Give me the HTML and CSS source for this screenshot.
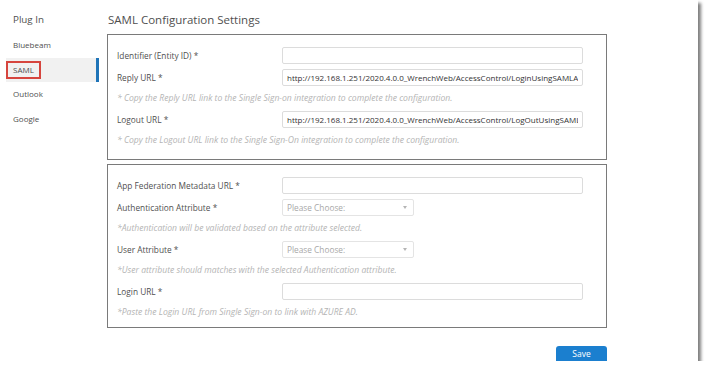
FILE: index.html
```html
<!DOCTYPE html>
<html lang="en">
<head>
    <meta charset="UTF-8">
    <title>SAML Configuration Settings</title>
    <link rel="stylesheet" href="styles.css">
</head>
<body>
    <div class="frame">
        <div class="sidebar">
            <div class="side-title">Plug In</div>
            <div class="side-item">Bluebeam</div>
            <div class="side-item active"><span class="mark">SAML</span></div>
            <div class="side-item">Outlook</div>
            <div class="side-item">Google</div>
        </div>

        <div class="main">
            <div class="main-title">SAML Configuration Settings</div>

            <div class="panel">
                <div class="row">
                    <label class="label">Identifier (Entity ID) *</label>
                    <input class="field" type="text" value="">
                </div>
                <div class="row">
                    <label class="label">Reply URL *</label>
                    <input class="field" type="text" value="http://192.168.1.251/2020.4.0.0_WrenchWeb/AccessControl/LoginUsingSAMLAuth">
                </div>
                <div class="help">* Copy the Reply URL link to the Single Sign-on integration to complete the configuration.</div>
                <div class="row">
                    <label class="label">Logout URL *</label>
                    <input class="field" type="text" value="http://192.168.1.251/2020.4.0.0_WrenchWeb/AccessControl/LogOutUsingSAMLAuth">
                </div>
                <div class="help">* Copy the Logout URL link to the Single Sign-On integration to complete the configuration.</div>
            </div>

            <div class="panel second">
                <div class="row">
                    <label class="label">App Federation Metadata URL *</label>
                    <input class="field" type="text" value="">
                </div>
                <div class="row">
                    <label class="label">Authentication Attribute *</label>
                    <div class="select">Please Choose:<span class="caret"></span></div>
                </div>
                <div class="help">*Authentication will be validated based on the attribute selected.</div>
                <div class="row">
                    <label class="label">User Attribute *</label>
                    <div class="select">Please Choose:<span class="caret"></span></div>
                </div>
                <div class="help">*User attribute should matches with the selected Authentication attribute.</div>
                <div class="row">
                    <label class="label">Login URL *</label>
                    <input class="field" type="text" value="">
                </div>
                <div class="help">*Paste the Login URL from Single Sign-on to link with AZURE AD.</div>
            </div>

            <div class="actions">
                <button class="save">Save</button>
            </div>
        </div>
    </div>
</body>
</html>
```

FILE: styles.css
```css
:root {
    --text-color: #4f4f4f;
    --help-color: #b4b4b4;
    --border-color: #7a7a7a;
    --field-border: #dcdcdc;
    --blue: #1b7fcf;
}

body {
    margin: 0;
    padding: 0;
    background: #fff;
    font-family: 'Open Sans', sans-serif;
    color: var(--text-color);
}

.frame {
    width: 698px;
    height: 361px;
    background: #fff;
    box-shadow: 3px 3px 3px rgba(0, 0, 0, 0.5);
    display: flex;
    overflow: hidden;
}

.sidebar {
    width: 99px;
    flex-shrink: 0;
}

.side-title {
    height: 33px;
    line-height: 40px;
    padding-left: 13px;
    font-size: 9.8px;
}

.side-item {
    height: 24.5px;
    line-height: 24.5px;
    margin-left: 6px;
    padding-left: 7px;
    font-size: 8px;
}

.side-item.active {
    background: #f1f1f1;
    border-right: 3px solid #1f74b8;
}

.mark {
    display: inline-block;
    margin-left: -7px;
    padding: 0 5px;
    height: 14px;
    line-height: 14px;
    border: 2px solid #d6453e;
    vertical-align: middle;
}

.main {
    margin-left: 8px;
    width: 500px;
}

.main-title {
    height: 34px;
    line-height: 40px;
    font-size: 11.5px;
    padding-left: 1px;
}

.panel {
    border: 1px solid var(--border-color);
    padding: 9px 23px 9px 9px;
}

.panel.second {
    margin-top: 4px;
    padding-bottom: 5px;
}

.row {
    height: 22px;
    display: flex;
    align-items: center;
}

.label {
    width: 165px;
    font-size: 8.3px;
}

.field {
    box-sizing: border-box;
    width: 301px;
    height: 17px;
    margin: 0;
    padding: 0 4px;
    border: 1px solid var(--field-border);
    border-radius: 2px;
    font-family: 'Open Sans', sans-serif;
    font-size: 8px;
    color: #333;
    outline: none;
}

.select {
    box-sizing: border-box;
    position: relative;
    width: 132px;
    height: 17px;
    line-height: 15px;
    padding-left: 4px;
    border: 1px solid #e4e4e4;
    border-radius: 2px;
    font-size: 8.3px;
    color: #a8a8a8;
}

.caret {
    position: absolute;
    right: 6px;
    top: 6px;
    border-left: 2.5px solid transparent;
    border-right: 2.5px solid transparent;
    border-top: 3px solid #b5b5b5;
}

.help {
    height: 20px;
    line-height: 20px;
    font-size: 8.6px;
    font-style: italic;
    color: var(--help-color);
}

.actions {
    display: flex;
    justify-content: flex-end;
    padding-top: 18px;
}

.save {
    width: 51px;
    height: 18px;
    padding: 0 0 3px 0;
    border: none;
    border-radius: 3px;
    background: var(--blue);
    color: #fff;
    font-family: 'Open Sans', sans-serif;
    font-size: 8.5px;
    cursor: pointer;
}
```
